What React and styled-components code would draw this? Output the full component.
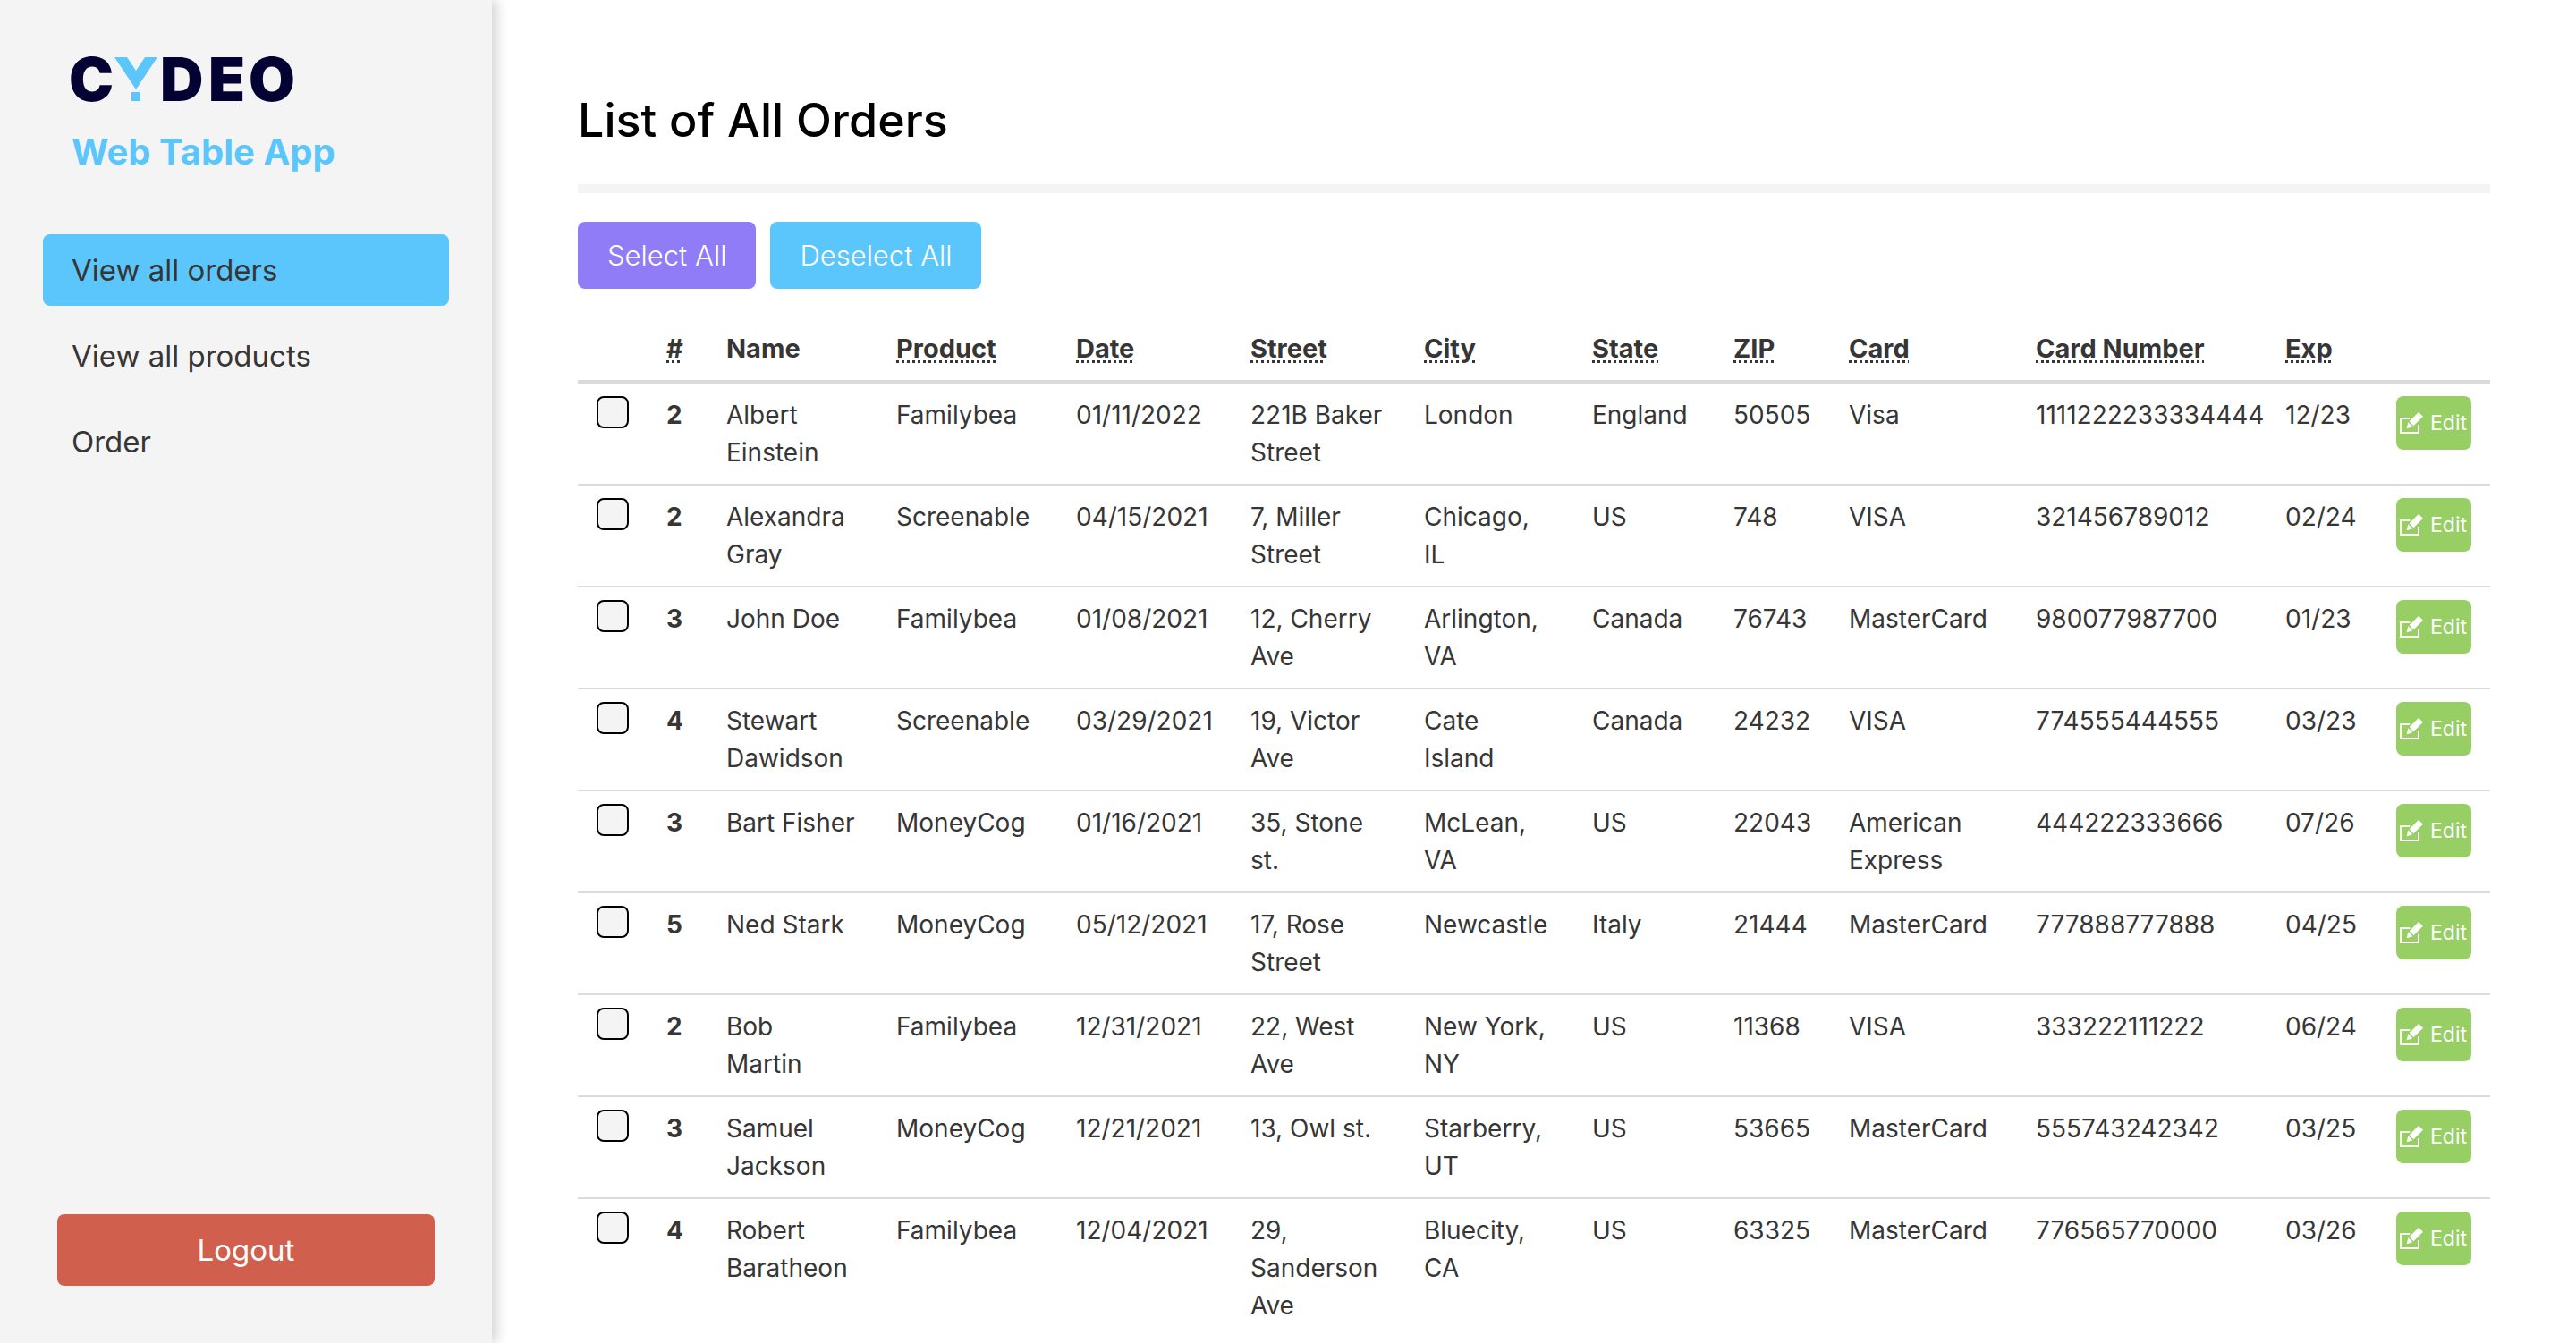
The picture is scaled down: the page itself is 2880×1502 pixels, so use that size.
import React from "react";
import styled, { createGlobalStyle } from "styled-components";

const Global = createGlobalStyle`
  *, *::before, *::after { box-sizing: border-box; }
  body { margin: 0; background: #fff; color: #363636; }
  body, button, input { font-family: Inter, "Open Sans", sans-serif; }
`;

const Layout = styled.div`
  display: flex;
  height: 100vh;
  overflow: hidden;
`;

const Sidebar = styled.aside`
  flex: 0 0 550px;
  display: flex;
  flex-direction: column;
  padding: 64px 48px;
  background: #f4f4f4;
  box-shadow: 6px 0 12px rgba(0, 0, 0, 0.16);
`;

const Brand = styled.header`
  padding-left: 32px;
`;

const Logo = styled.svg`
  display: block;
  width: 250px;
  height: 49px;
  overflow: visible;
`;

const LogoLetter = styled.text`
  fill: #040133;
  font-family: Inter, sans-serif;
  font-size: 67px;
  font-weight: 900;
`;

const AppName = styled.p`
  margin: 28px 0 0;
  color: #5bc6fb;
  font-size: 40px;
  font-weight: 700;
  line-height: 58px;
`;

const Nav = styled.nav`
  display: flex;
  flex-direction: column;
  gap: 16px;
  margin-top: 63px;
`;

const NavLink = styled.a`
  padding: 16px 32px;
  border-radius: 8px;
  background: ${(p) => (p.$active ? "#5bc6fb" : "transparent")};
  color: #363636;
  font-size: 33px;
  line-height: 48px;
  text-decoration: none;
`;

const Button = styled.button`
  border: 0;
  border-radius: 8px;
  background: ${(p) => p.$color};
  color: #fff;
  cursor: pointer;
`;

const LogoutButton = styled(Button)`
  height: 80px;
  margin: auto 16px 0;
  font-size: 33px;
`;

const Main = styled.main`
  flex: 1;
  min-width: 0;
  padding: 96px;
`;

const Title = styled.h1`
  margin: 0;
  color: #000;
  font-size: 52px;
  font-weight: 500;
  line-height: 78px;
`;

const Divider = styled.hr`
  height: 10px;
  margin: 32px 0;
  border: 0;
  background: #f4f4f4;
`;

const Toolbar = styled.div`
  display: flex;
  gap: 16px;
  margin-bottom: 32px;
`;

const ToolButton = styled(Button)`
  height: 75px;
  padding: 0 33px;
  font-size: 31px;
  font-weight: 300;
`;

const Table = styled.table`
  width: 100%;
  table-layout: fixed;
  border-collapse: separate;
  border-spacing: 0;
  font-size: 28px;
  line-height: 42px;
`;

const Col = styled.col`
  width: ${(p) => p.$width}px;
`;

const HeadCell = styled.th`
  padding: 14px 0 14px 21px;
  border-bottom: 4px solid #dbdbdb;
  font-size: 29px;
  text-align: left;
  white-space: nowrap;
`;

const Abbr = styled.abbr`
  text-decoration: underline dotted 3px;
  text-underline-offset: 3px;
`;

const Cell = styled.td`
  padding: 14px 0 14px 21px;
  border-bottom: 2px solid #dbdbdb;
  font-weight: ${(p) => (p.$strong ? 700 : 400)};
  vertical-align: top;
  white-space: pre;

  tr:last-child > & { border-bottom: 0; }
`;

const Checkbox = styled.input`
  appearance: none;
  display: block;
  width: 36px;
  height: 36px;
  margin: 0;
  border: 2px solid #000;
  border-radius: 8px;
  background: #f4f4f4;
  &:checked { background: #5bc6fb; }
`;

const EditButton = styled(Button)`
  display: flex;
  align-items: center;
  gap: 8px;
  height: 60px;
  width: 84px;
  padding: 0 4px;
  font-size: 23px;
`;

const EditIcon = () => (
  <svg width="26" height="24" viewBox="0 0 78 72" aria-hidden="true">
    <path d="M34 21H3v48h60V42" fill="none" stroke="#fff" strokeWidth="6" />
    <path d="M63 0 78 14 46 46 32 31ZM28 34 43 49 23 55Z" fill="#fff" />
  </svg>
);

const columns = [
  { width: 78 },
  { label: "#", width: 67, abbr: true },
  { label: "Name", width: 190 },
  { label: "Product", width: 201, abbr: true },
  { label: "Date", width: 195, abbr: true },
  { label: "Street", width: 194, abbr: true },
  { label: "City", width: 188, abbr: true },
  { label: "State", width: 158, abbr: true },
  { label: "ZIP", width: 129, abbr: true },
  { label: "Card", width: 209, abbr: true },
  { label: "Card Number", width: 279, abbr: true },
  { label: "Exp", width: 124, abbr: true },
  { width: 126 },
];

const orders = [
  ["2", "Albert\nEinstein", "Familybea", "01/11/2022", "221B Baker\nStreet", "London", "England", "50505", "Visa", "1111222233334444", "12/23"],
  ["2", "Alexandra\nGray", "Screenable", "04/15/2021", "7, Miller\nStreet", "Chicago,\nIL", "US", "748", "VISA", "321456789012", "02/24"],
  ["3", "John Doe", "Familybea", "01/08/2021", "12, Cherry\nAve", "Arlington,\nVA", "Canada", "76743", "MasterCard", "980077987700", "01/23"],
  ["4", "Stewart\nDawidson", "Screenable", "03/29/2021", "19, Victor\nAve", "Cate\nIsland", "Canada", "24232", "VISA", "774555444555", "03/23"],
  ["3", "Bart Fisher", "MoneyCog", "01/16/2021", "35, Stone\nst.", "McLean,\nVA", "US", "22043", "American\nExpress", "444222333666", "07/26"],
  ["5", "Ned Stark", "MoneyCog", "05/12/2021", "17, Rose\nStreet", "Newcastle", "Italy", "21444", "MasterCard", "777888777888", "04/25"],
  ["2", "Bob\nMartin", "Familybea", "12/31/2021", "22, West\nAve", "New York,\nNY", "US", "11368", "VISA", "333222111222", "06/24"],
  ["3", "Samuel\nJackson", "MoneyCog", "12/21/2021", "13, Owl st.", "Starberry,\nUT", "US", "53665", "MasterCard", "555743242342", "03/25"],
  ["4", "Robert\nBaratheon", "Familybea", "12/04/2021", "29,\nSanderson\nAve", "Bluecity,\nCA", "US", "63325", "MasterCard", "776565770000", "03/26"],
];

const links = ["View all orders", "View all products", "Order"];

export default function App() {
  const [active, setActive] = React.useState(0);
  const [selected, setSelected] = React.useState(() => orders.map(() => false));
  const toggle = (index) =>
    setSelected((list) => list.map((value, i) => (i === index ? !value : value)));

  return (
    <>
      <Global />
      <Layout>
        <Sidebar>
          <Brand>
            <Logo viewBox="0 0 250 49" role="img" aria-label="Cydeo">
              <LogoLetter x="-3" y="49">C</LogoLetter>
              <path d="M48 0H62L72 15 82 0H96L72 36ZM67 39H77V49H67Z" fill="#5bc6fb" />
              <LogoLetter x="99" y="49">D</LogoLetter>
              <LogoLetter x="153" y="49">E</LogoLetter>
              <LogoLetter x="198" y="49">O</LogoLetter>
            </Logo>
            <AppName>Web Table App</AppName>
          </Brand>
          <Nav>
            {links.map((label, index) => (
              <NavLink
                key={label}
                href="#"
                $active={index === active}
                onClick={() => setActive(index)}
              >
                {label}
              </NavLink>
            ))}
          </Nav>
          <LogoutButton $color="#d0604d">Logout</LogoutButton>
        </Sidebar>
        <Main>
          <Title>List of All Orders</Title>
          <Divider />
          <Toolbar>
            <ToolButton $color="#8f7cf6" onClick={() => setSelected(orders.map(() => true))}>
              Select All
            </ToolButton>
            <ToolButton $color="#5bc6fb" onClick={() => setSelected(orders.map(() => false))}>
              Deselect All
            </ToolButton>
          </Toolbar>
          <Table>
            <colgroup>
              {columns.map((column, i) => (
                <Col key={i} $width={column.width} />
              ))}
            </colgroup>
            <thead>
              <tr>
                {columns.map((column, i) => (
                  <HeadCell key={i}>
                    {column.abbr ? <Abbr>{column.label}</Abbr> : column.label}
                  </HeadCell>
                ))}
              </tr>
            </thead>
            <tbody>
              {orders.map((order, row) => (
                <tr key={row}>
                  <Cell>
                    <Checkbox
                      type="checkbox"
                      aria-label={`Select order of ${order[1].replace("\n", " ")}`}
                      checked={selected[row]}
                      onChange={() => toggle(row)}
                    />
                  </Cell>
                  {order.map((value, i) => (
                    <Cell key={i} $strong={i === 0}>
                      {value}
                    </Cell>
                  ))}
                  <Cell>
                    <EditButton $color="#97cf64">
                      <EditIcon />
                      Edit
                    </EditButton>
                  </Cell>
                </tr>
              ))}
            </tbody>
          </Table>
        </Main>
      </Layout>
    </>
  );
}
